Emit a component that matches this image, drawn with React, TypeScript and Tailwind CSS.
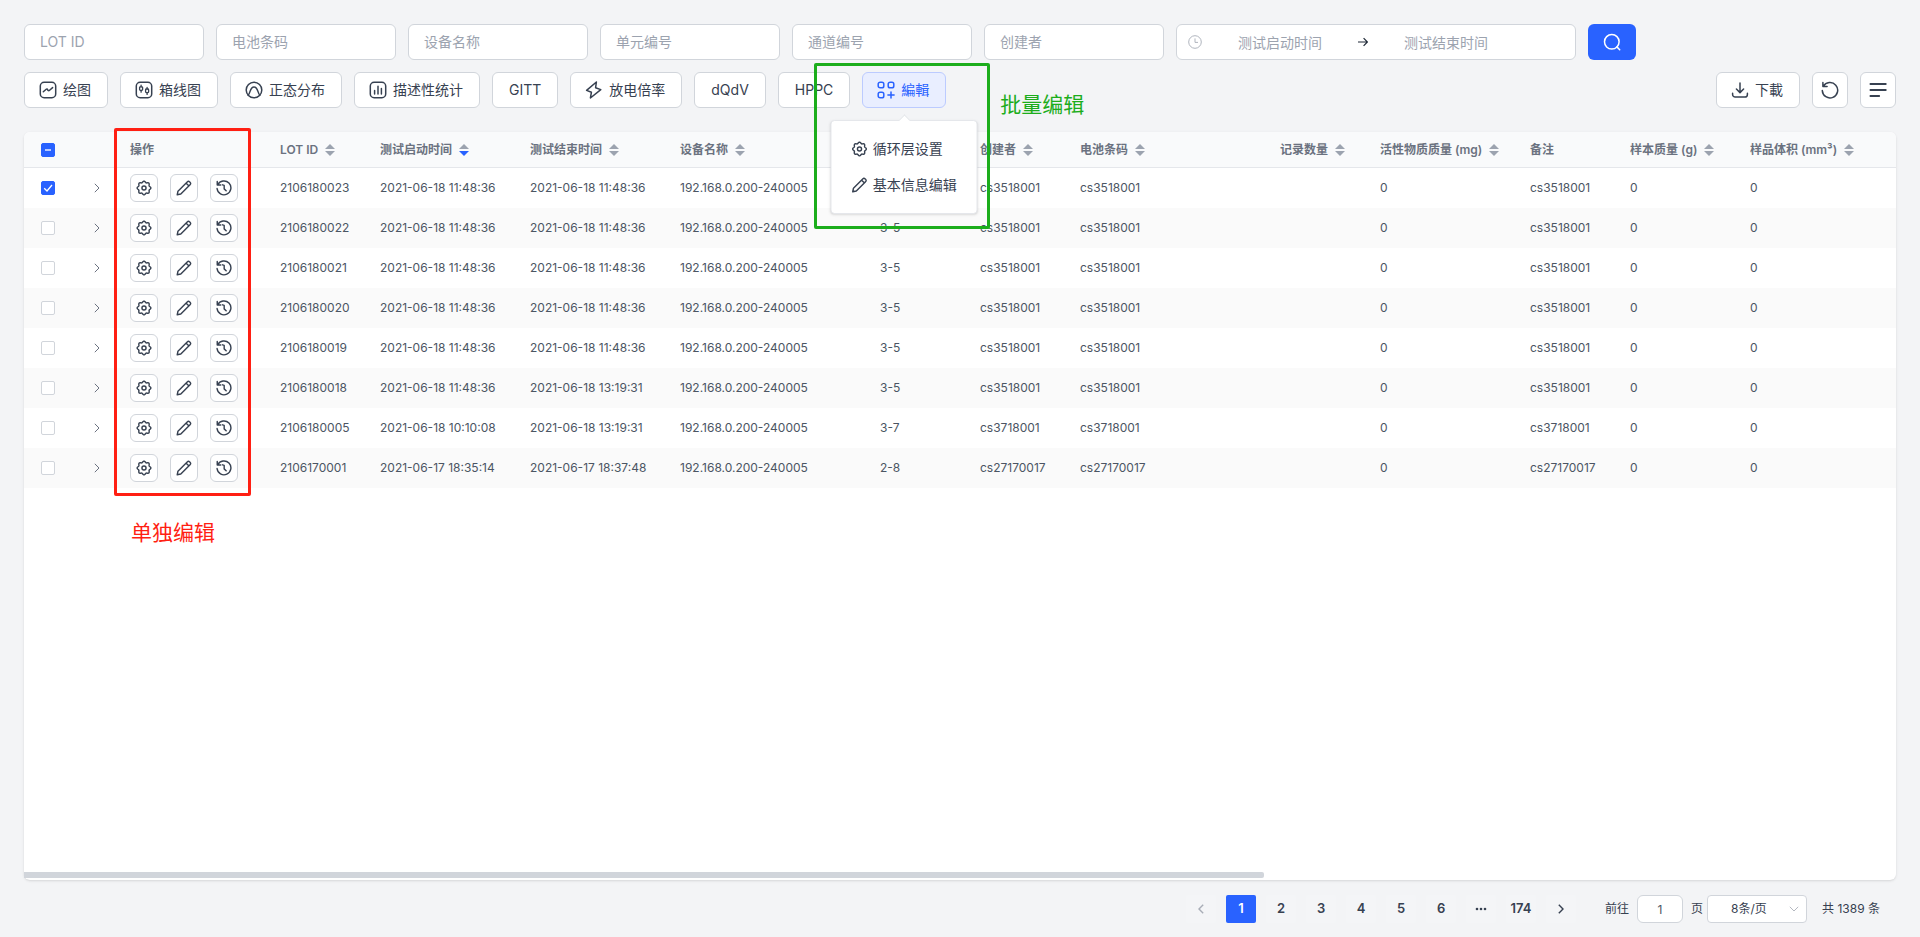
import type { ReactNode } from "react";

type IconProps = { className?: string };

function Svg({ className = "size-[18px]", children, w = 1.5 }: IconProps & { children: ReactNode; w?: number }) {
  return (
    <svg
      viewBox="0 0 18 18"
      className={`${className} shrink-0`}
      fill="none"
      stroke="currentColor"
      strokeWidth={w}
      strokeLinecap="round"
      strokeLinejoin="round"
      aria-hidden="true"
    >
      {children}
    </svg>
  );
}

const TrendIcon = () => (
  <Svg>
    <rect x="1.3" y="1.3" width="15.4" height="15.4" rx="3.8" />
    <path d="M4.3 10.8 L7.2 8.2 Q8 7.5 8.6 8.6 Q9.4 10.4 10.6 9.2 L13.6 6.6" />
  </Svg>
);
const BoxPlotIcon = () => (
  <Svg>
    <rect x="1.3" y="1.3" width="15.4" height="15.4" rx="3.8" />
    <rect x="4.6" y="5.8" width="3" height="3.6" rx="0.8" strokeWidth="1.3" />
    <path d="M6.1 4.2v1.6M6.1 9.4v1.8" strokeWidth="1.3" />
    <rect x="10.6" y="8" width="3" height="3.6" rx="0.8" strokeWidth="1.3" />
    <path d="M12.1 6.4V8M12.1 11.6v1.8" strokeWidth="1.3" />
  </Svg>
);
const NormalIcon = () => (
  <Svg>
    <circle cx="9" cy="9" r="7.8" />
    <path d="M3.2 14.2 C5.2 12.6 5 6 9 6 C13 6 12.8 12.6 14.8 14.2" />
  </Svg>
);
const BarsIcon = () => (
  <Svg>
    <rect x="1.3" y="1.3" width="15.4" height="15.4" rx="3.8" />
    <path d="M5.6 9.4v3.6M9 5.2V13M12.4 7.6V13" />
  </Svg>
);
const BoltIcon = () => (
  <Svg>
    <path d="M11.4 1 L1.6 9.4 L6.4 11.3 L5.4 17 L15.8 8.6 L10.6 6.7 Z" />
  </Svg>
);
const GridPlusIcon = () => (
  <Svg>
    <rect x="1.2" y="1.2" width="5.6" height="5.6" rx="1.9" />
    <rect x="11.2" y="1.2" width="5.6" height="5.6" rx="1.9" />
    <rect x="1.2" y="11.2" width="5.6" height="5.6" rx="1.9" />
    <path d="M14 10.9v6.2M10.9 14h6.2" />
  </Svg>
);
const DownloadIcon = () => (
  <Svg>
    <path d="M9 2v9.4M5.4 8 9 11.6 12.6 8M1.6 12.2v1.2a2.6 2.6 0 0 0 2.6 2.6h9.6a2.6 2.6 0 0 0 2.6-2.6v-1.2" />
  </Svg>
);
const ResetIcon = () => (
  <Svg>
    <path d="M1.9 1.4v4.2h4.2M2.3 5.4A7.7 7.7 0 1 1 1.3 9.6" />
  </Svg>
);
const LinesIcon = () => (
  <Svg w={1.8}>
    <path d="M1.4 3h15.4M1.4 9h15.4M1.4 15h8.8" />
  </Svg>
);

const gearOutline =
  Array.from({ length: 96 }, (_, i) => {
    const a = (i / 96) * Math.PI * 2;
    const r = 7 + 0.75 * Math.cos(8 * a);
    return `${i ? "L" : "M"}${(9 + r * Math.sin(a)).toFixed(2)} ${(9 - r * Math.cos(a)).toFixed(2)}`;
  }).join("") + "Z";

const GearIcon = ({ className }: IconProps) => (
  <Svg className={className} w={1.6}>
    <path d={gearOutline} />
    <circle cx="9" cy="9" r="2.3" />
  </Svg>
);
const PencilIcon = ({ className }: IconProps) => (
  <Svg className={className} w={1.6}>
    <path d="M1.4 16.6 2.2 12.6 12.6 2.2a2 2 0 0 1 2.8 0l.4.4a2 2 0 0 1 0 2.8L5.4 15.8ZM11.4 3.6l3 3" />
  </Svg>
);
const HistoryIcon = ({ className }: IconProps) => (
  <Svg className={className} w={1.6}>
    <path d="M1.4 1.6v4h4M2 5.4A7.8 7.8 0 1 1 1.2 9.6M7.4 5.4 9.2 6v4l2.2 2" />
  </Svg>
);

function Button({
  icon,
  children,
  active = false,
  label,
}: {
  icon?: ReactNode;
  children?: ReactNode;
  active?: boolean;
  label?: string;
}) {
  const padding = !children ? "w-9" : icon ? "pr-4 pl-[14px]" : "px-4";
  return (
    <button
      type="button"
      aria-label={label}
      className={`flex h-9 shrink-0 items-center justify-center gap-1.5 rounded-md border text-sm whitespace-nowrap ${padding} ${
        active ? "border-[#bccbff] bg-[#e9eeff] text-[#2962ff]" : "border-[#d1d5db] bg-white text-[#374151]"
      }`}
    >
      {icon}
      {children}
    </button>
  );
}

function Sorter({ desc = false }: { desc?: boolean }) {
  return (
    <svg viewBox="0 0 10 12" className="h-3 w-[10px] shrink-0" aria-hidden="true">
      <path d="M5 0 10 5H0Z" fill="#9ca3af" />
      <path d="M0 7h10L5 12Z" fill={desc ? "#2962ff" : "#9ca3af"} />
    </svg>
  );
}

type Column = { title: string; width: string; sort?: "none" | "desc" };

const columns: Column[] = [
  { title: "操作", width: "w-[150px]" },
  { title: "LOT ID", width: "w-[100px]", sort: "none" },
  { title: "测试启动时间", width: "w-[150px]", sort: "desc" },
  { title: "测试结束时间", width: "w-[150px]", sort: "none" },
  { title: "设备名称", width: "w-[200px]", sort: "none" },
  { title: "", width: "w-[100px]" },
  { title: "创建者", width: "w-[100px]", sort: "none" },
  { title: "电池条码", width: "w-[200px]", sort: "none" },
  { title: "记录数量", width: "w-[100px]", sort: "none" },
  { title: "活性物质质量 (mg)", width: "w-[150px]", sort: "none" },
  { title: "备注", width: "w-[100px]" },
  { title: "样本质量 (g)", width: "w-[120px]", sort: "none" },
  { title: "样品体积 (mm³)", width: "", sort: "none" },
];

const device = "192.168.0.200-240005";
const rows = [
  ["2106180023", "2021-06-18 11:48:36", "2021-06-18 11:48:36", "", "cs3518001"],
  ["2106180022", "2021-06-18 11:48:36", "2021-06-18 11:48:36", "3-5", "cs3518001"],
  ["2106180021", "2021-06-18 11:48:36", "2021-06-18 11:48:36", "3-5", "cs3518001"],
  ["2106180020", "2021-06-18 11:48:36", "2021-06-18 11:48:36", "3-5", "cs3518001"],
  ["2106180019", "2021-06-18 11:48:36", "2021-06-18 11:48:36", "3-5", "cs3518001"],
  ["2106180018", "2021-06-18 11:48:36", "2021-06-18 13:19:31", "3-5", "cs3518001"],
  ["2106180005", "2021-06-18 10:10:08", "2021-06-18 13:19:31", "3-7", "cs3718001"],
  ["2106170001", "2021-06-17 18:35:14", "2021-06-17 18:37:48", "2-8", "cs27170017"],
];

function Check({ label, state }: { label: string; state: "on" | "off" | "mixed" }) {
  return (
    <span className="grid place-items-center">
      <input
        type="checkbox"
        aria-label={label}
        defaultChecked={state !== "off"}
        className="col-start-1 row-start-1 size-[14px] appearance-none rounded-xs border border-[#d1d5db] bg-white checked:border-[#2962ff] checked:bg-[#2962ff]"
      />
      {state !== "off" && (
        <svg viewBox="0 0 14 14" className="pointer-events-none col-start-1 row-start-1 size-[14px]" fill="none" aria-hidden="true">
          {state === "on" ? (
            <path d="M3.2 7.2 6 10l5-6" stroke="#fff" strokeWidth="1.3" />
          ) : (
            <path d="M4 7h6" stroke="#b9caff" strokeWidth="2" />
          )}
        </svg>
      )}
    </span>
  );
}

function SearchBar() {
  const fields = ["LOT ID", "电池条码", "设备名称", "单元编号", "通道编号", "创建者"];
  const dateInput = "h-full w-[156px] bg-transparent text-center placeholder:text-[#9ca3af] outline-none";
  return (
    <form className="flex flex-wrap gap-3 text-sm">
      {fields.map((f) => (
        <input
          key={f}
          aria-label={f}
          placeholder={f}
          className="h-9 w-[180px] rounded-md border border-[#d1d5db] bg-white px-[15px] pb-0.5 placeholder:text-[#9ca3af]"
        />
      ))}
      <div className="flex h-9 w-[400px] items-center rounded-md border border-[#d1d5db] bg-white pl-[11px]">
        <svg viewBox="0 0 14 14" className="size-[14px] shrink-0" fill="none" stroke="#b0b5be" aria-hidden="true">
          <circle cx="7" cy="7" r="6.3" />
          <path d="M7 3.4V7.4h3" />
        </svg>
        <input aria-label="测试启动时间" placeholder="测试启动时间" className={dateInput} />
        <svg viewBox="0 0 10 10" className="size-[10px] shrink-0" fill="none" stroke="#1f2937" strokeWidth="1.2" aria-hidden="true">
          <path d="M0 5h9.4M5.6 1.2 9.4 5 5.6 8.8" />
        </svg>
        <input aria-label="测试结束时间" placeholder="测试结束时间" className={dateInput} />
      </div>
      <button type="button" aria-label="搜索" className="flex h-9 w-12 items-center justify-center rounded-md bg-[#2962ff] text-white">
        <Svg>
          <circle cx="8.8" cy="8.8" r="7.3" />
          <path d="m13.9 13.9 2.8 2.8" />
        </Svg>
      </button>
    </form>
  );
}

function EditMenu() {
  const item = "flex h-9 w-full items-center gap-[5px] px-5 text-sm whitespace-nowrap text-[#374151]";
  return (
    <div className="relative">
      <Button icon={<GridPlusIcon />} active>
        編輯
      </Button>
      <div className="absolute top-12 left-1/2 z-10 -translate-x-1/2 rounded-sm border border-[#e5e7eb] bg-white py-[10px] shadow-sm">
        <span className="absolute -top-[5px] left-1/2 -ml-1 size-2 rotate-45 border-t border-l border-[#e5e7eb] bg-white" />
        <button type="button" className={item}>
          <GearIcon className="size-4" />
          循环层设置
        </button>
        <button type="button" className={item}>
          <PencilIcon className="size-4" />
          基本信息编辑
        </button>
      </div>
      <div className="pointer-events-none absolute -top-[9px] -left-12 z-20 h-[166px] w-44 rounded-xs border-3 border-[#1cad1c]" />
      <span className="absolute top-[17px] left-[138px] z-20 text-[21px] leading-8 whitespace-nowrap text-[#1cad1c]">批量编辑</span>
    </div>
  );
}

function Toolbar() {
  return (
    <div className="flex gap-3">
      <Button icon={<TrendIcon />}>绘图</Button>
      <Button icon={<BoxPlotIcon />}>箱线图</Button>
      <Button icon={<NormalIcon />}>正态分布</Button>
      <Button icon={<BarsIcon />}>描述性统计</Button>
      <Button>GITT</Button>
      <Button icon={<BoltIcon />}>放电倍率</Button>
      <Button>dQdV</Button>
      <Button>HPPC</Button>
      <EditMenu />
      <div className="ml-auto flex gap-3">
        <Button icon={<DownloadIcon />}>下載</Button>
        <Button icon={<ResetIcon />} label="重置" />
        <Button icon={<LinesIcon />} label="列设置" />
      </div>
    </div>
  );
}

function RowActions() {
  const cls =
    "flex size-7 items-center justify-center rounded-md border border-[#d1d5db] bg-white text-[#374151]";
  return (
    <div className="flex gap-3">
      <button type="button" aria-label="循环层设置" className={cls}>
        <GearIcon className="size-4" />
      </button>
      <button type="button" aria-label="基本信息编辑" className={cls}>
        <PencilIcon className="size-4" />
      </button>
      <button type="button" aria-label="历史" className={cls}>
        <HistoryIcon className="size-4" />
      </button>
    </div>
  );
}

function DataTable() {
  return (
    <table className="w-full min-w-[1860px] table-fixed border-separate border-spacing-0 text-left text-xs text-[#4b5563]">
      <thead>
        <tr className="h-9 text-[#6b7280]">
          <th className="w-12 rounded-tl-md border-b border-[#e5e7eb] bg-[#f9fafb]">
            <Check label="全选" state="mixed" />
          </th>
          <th className="w-12 border-b border-[#e5e7eb] bg-[#f9fafb]" />
          {columns.map((c) => (
            <th key={c.title} className={`${c.width} border-b border-[#e5e7eb] bg-[#f9fafb] pl-[10px] font-semibold last:rounded-tr-md`}>
              <span className="flex items-center gap-[7px] whitespace-nowrap">
                {c.title}
                {c.sort && <Sorter desc={c.sort === "desc"} />}
              </span>
            </th>
          ))}
        </tr>
      </thead>
      <tbody>
        {rows.map(([lot, start, end, channel, user], i) => (
          <tr key={lot} className="h-10 even:bg-[#fafafa]">
            <td>
              <Check label={`选择 ${lot}`} state={i === 0 ? "on" : "off"} />
            </td>
            <td>
              <button type="button" aria-label={`展开 ${lot}`} className="mx-auto block pl-0.5">
                <svg viewBox="0 0 6 10" className="h-[10px] w-[6px]" fill="none" stroke="#6b7280" aria-hidden="true">
                  <path d="M.8.8 5 5 .8 9.2" />
                </svg>
              </button>
            </td>
            <td className="pl-[10px]">
              <RowActions />
            </td>
            {[lot, start, end, device, channel, user, user, "", "0", user, "0", "0"].map((v, j) => (
              <td key={j} className="pl-[10px] whitespace-nowrap">
                {v}
              </td>
            ))}
          </tr>
        ))}
      </tbody>
    </table>
  );
}

function Pagination() {
  const page = "flex h-7 min-w-[30px] items-center justify-center rounded-xs text-[13px] font-semibold";
  return (
    <nav className="flex items-center justify-end pr-4 text-xs text-[#374151]" aria-label="分页">
      <div className="flex gap-[10px]">
        <button type="button" aria-label="上一页" className={`${page} bg-[#f4f5f7]`}>
          <svg viewBox="0 0 6 10" className="h-[10px] w-[6px]" fill="none" stroke="#a8adb7" strokeWidth="1.4" aria-hidden="true">
            <path d="M5.2.8 1 5l4.2 4.2" />
          </svg>
        </button>
        {["1", "2", "3", "4", "5", "6", "···", "174"].map((p) => (
          <button key={p} type="button" className={`${page} ${p === "1" ? "bg-[#2962ff] text-white" : "bg-[#f4f5f7]"}`}>
            {p === "···" ? (
              <svg viewBox="0 0 12 4" className="h-1 w-3" fill="currentColor" aria-label="更多">
                <circle cx="2" cy="2" r="1.3" />
                <circle cx="6" cy="2" r="1.3" />
                <circle cx="10" cy="2" r="1.3" />
              </svg>
            ) : (
              p
            )}
          </button>
        ))}
        <button type="button" aria-label="下一页" className={`${page} bg-[#f4f5f7]`}>
          <svg viewBox="0 0 6 10" className="h-[10px] w-[6px]" fill="none" stroke="#374151" strokeWidth="1.4" aria-hidden="true">
            <path d="M.8.8 5 5 .8 9.2" />
          </svg>
        </button>
      </div>
      <label className="ml-[29px] flex items-center gap-2">
        前往
        <input
          defaultValue="1"
          aria-label="页码"
          className="h-7 w-[46px] rounded-md border border-[#d1d5db] bg-white text-center text-xs text-[#4b5563]"
        />
        页
      </label>
      <div className="ml-1 grid items-center">
        <select
          aria-label="每页条数"
          className="col-start-1 row-start-1 h-7 w-[100px] appearance-none rounded-sm border border-[#d1d5db] bg-white pl-[23px] text-xs"
        >
          <option>8条/页</option>
        </select>
        <svg
          viewBox="0 0 10 6"
          className="pointer-events-none col-start-1 row-start-1 mr-2 h-[6px] w-[10px] justify-self-end"
          fill="none"
          stroke="#b4b8c0"
          aria-hidden="true"
        >
          <path d="M.8.8 5 5 9.2.8" />
        </svg>
      </div>
      <span className="ml-[15px]">共 1389 条</span>
    </nav>
  );
}

export default function App() {
  return (
    <main className="flex min-h-screen flex-col bg-[#f3f4f6] px-6 pt-6 pb-[14px] font-[Inter,'Noto_Sans_CJK_SC',sans-serif]">
      <SearchBar />
      <div className="mt-3">
        <Toolbar />
      </div>
      <section className="relative mt-6 mb-[15px] flex flex-1 flex-col rounded-md bg-white shadow-sm">
        <div className="flex-1">
          <DataTable />
        </div>
        <div className="mb-0.5 h-1.5 w-53/80 rounded-r-xs bg-[#d1d5db]" />
        <div className="pointer-events-none absolute -top-1 left-[90px] h-[368px] w-[137px] rounded-xs border-3 border-[#ff1f13]" />
        <span className="absolute top-[385px] left-[107px] text-[21px] leading-8 text-[#ff1f13]">单独编辑</span>
      </section>
      <Pagination />
    </main>
  );
}
